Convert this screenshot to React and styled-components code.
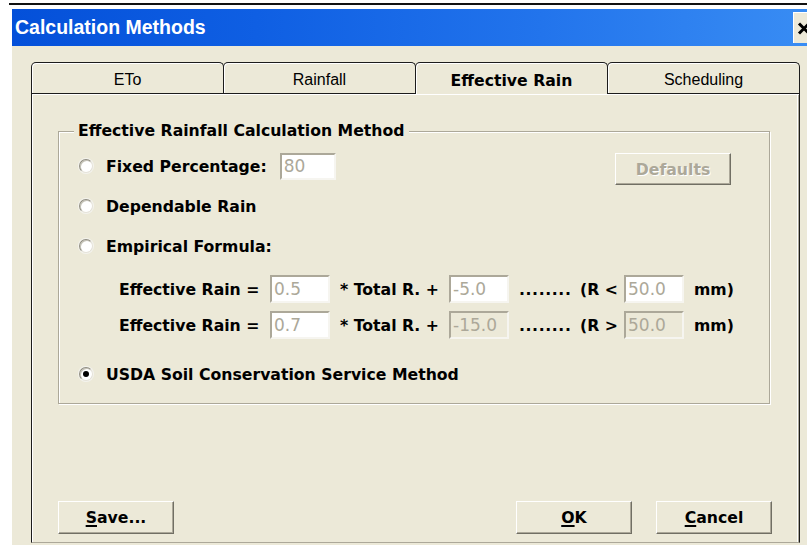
import React from 'react';
import styled, { createGlobalStyle, css } from 'styled-components';

const GlobalStyle = createGlobalStyle`
  html, body {
    margin: 0;
    padding: 0;
    background: #fff;
    overflow: hidden;
  }
  body {
    font-family: "DejaVu Sans", Verdana, sans-serif;
  }
`;

const BOLD = css`
  font-family: "DejaVu Sans", Verdana, sans-serif;
  font-weight: bold;
  font-size: 15.7px;
  color: #000;
`;

const Page = styled.div`
  width: 807px;
  height: 545px;
  overflow: hidden;
`;

const TopRule = styled.div`
  margin: 3px 0 0 9px;
  height: 2px;
  background: #111;
`;

const Window = styled.div`
  margin: 4px 0 0 12px;
  width: 815px;
  background: #ece9d8;
`;

const TitleBar = styled.div`
  height: 37px;
  display: flex;
  align-items: center;
  padding-left: 3px;
  background: linear-gradient(to right, #0450d9 0%, #0f5fe3 30%, #2274ec 65%, #3a8ef4 100%);
`;

const Title = styled.span`
  flex: 1;
  font-family: "Liberation Sans", Arial, sans-serif;
  font-weight: bold;
  font-size: 19.5px;
  color: #fff;
`;

const CloseButton = styled.div`
  box-sizing: border-box;
  width: 31px;
  height: 31px;
  margin-right: 3px;
  padding-left: 3px;
  display: flex;
  align-items: center;
  background: #ece9d8;
  border-top: 1px solid #fff;
  border-left: 1px solid #fff;
`;

const Body = styled.div`
  padding: 16px 27px 20px 19px;
`;

const TabStrip = styled.div`
  position: relative;
  z-index: 1;
  display: flex;
  align-items: flex-start;
  height: 31px;
`;

const Tab = styled.div`
  flex: 1;
  box-sizing: border-box;
  height: ${(p) => (p.$active ? '32px' : '31px')};
  margin-left: -1px;
  &:first-child {
    margin-left: 0;
  }
  padding-top: 4px;
  display: flex;
  align-items: center;
  justify-content: center;
  background: #ece9d8;
  border: 1px solid #1c1c1c;
  border-bottom: none;
  border-radius: 5px 5px 0 0;
  box-shadow: inset 1px 1px 0 #fff;
  ${(p) =>
    p.$active
      ? BOLD
      : css`
          font-family: "Liberation Sans", Arial, sans-serif;
          font-size: 16px;
          color: #000;
        `}
`;

const Panel = styled.div`
  box-sizing: border-box;
  height: 450px;
  padding: 37px 29px 0 26px;
  border: 1px solid #1c1c1c;
  border-bottom-color: #aca899;
  box-shadow: inset 1px 1px 0 #fff, inset -1px 0 0 #aca899, inset -2px 0 0 #fff;
`;

const Group = styled.div`
  position: relative;
  padding: 14px 0 9px 21px;
  border: 1px solid #aca899;
  box-shadow: inset 1px 1px 0 #fff, 1px 1px 0 #fff;
`;

const Legend = styled.span`
  position: absolute;
  top: -10px;
  left: 15px;
  padding: 0 4px;
  line-height: 18px;
  background: #ece9d8;
  ${BOLD}
`;

const OptionRow = styled.div`
  display: flex;
  align-items: center;
  height: 40px;
  margin-top: ${(p) => p.$gap || 0}px;
`;

const Radio = styled.span`
  position: relative;
  flex: none;
  box-sizing: border-box;
  width: 14px;
  height: 14px;
  margin: 0 13px 0 -1px;
  border-radius: 50%;
  background: #fff;
  border: 1px solid;
  border-color: #8f8d80 #e4e2d8 #e4e2d8 #8f8d80;
  box-shadow: inset 1px 1px 0 #c4c2b6, 0 0 0 1px #f4f3ee;
  ${(p) =>
    p.$checked &&
    css`
      &::after {
        content: '';
        position: absolute;
        left: 3px;
        top: 3px;
        width: 6px;
        height: 6px;
        border-radius: 50%;
        background: #000;
      }
    `}
`;

const Label = styled.span`
  ${BOLD}
  white-space: nowrap;
`;

const Field = styled.input`
  box-sizing: border-box;
  width: ${(p) => p.$w}px;
  height: ${(p) => p.$h}px;
  margin: 0 0 0 ${(p) => p.$ml || 0}px;
  padding: 0 0 0 2px;
  border: 2px solid;
  border-color: #aca899 #f6f5f0 #f6f5f0 #aca899;
  background: ${(p) => (p.$off ? '#ece9d8' : '#fff')};
  font-family: "DejaVu Sans", Verdana, sans-serif;
  font-size: 17px;
  color: #aca899;
  outline: none;
`;

const Button = styled.button`
  box-sizing: border-box;
  width: 116px;
  height: 33px;
  margin: 0;
  padding: 0;
  background: #ece9d8;
  border: 1px solid;
  border-color: #fff #716f64 #716f64 #fff;
  box-shadow: inset -1px -1px 0 #aca899;
  ${BOLD}
  ${(p) =>
    p.disabled &&
    css`
      color: #aca899;
      text-shadow: 1px 1px 0 #fff;
    `}
  u {
    text-decoration-thickness: 2px;
    text-underline-offset: 2px;
  }
`;

const DefaultsButton = styled(Button)`
  margin: 6px 38px 0 auto;
  height: 32px;
`;

const Formula = styled.div`
  display: grid;
  grid-template-columns: 151px 70px 109px 70px 61px 44px 70px auto;
  grid-auto-rows: 36px;
  align-items: center;
  margin-top: 5px;
  padding-left: 39px;
`;

const Dots = styled.span`
  ${BOLD}
  letter-spacing: 0.6px;
`;

const ButtonRow = styled.div`
  display: flex;
  gap: 24px;
  margin: 97px -2px 0 0;
`;

const Spacer = styled.div`
  flex: 1;
`;

const rules = [
  { a: '0.5', b: '-5.0', op: '<', c: '50.0', off: false },
  { a: '0.7', b: '-15.0', op: '>', c: '50.0', off: true },
];

export default function App() {
  return (
    <Page>
      <GlobalStyle />
      <TopRule />
      <Window>
        <TitleBar>
          <Title>Calculation Methods</Title>
          <CloseButton>
            <svg width="14" height="13" viewBox="0 0 14 13">
              <path d="M2 1.5 L12 11.5 M12 1.5 L2 11.5" stroke="#000" strokeWidth="3" />
            </svg>
          </CloseButton>
        </TitleBar>
        <Body>
          <TabStrip>
            <Tab>ETo</Tab>
            <Tab>Rainfall</Tab>
            <Tab $active>Effective Rain</Tab>
            <Tab>Scheduling</Tab>
          </TabStrip>
          <Panel>
            <Group>
              <Legend>Effective Rainfall Calculation Method</Legend>
              <OptionRow>
                <Radio />
                <Label>Fixed Percentage:</Label>
                <Field $w={56} $h={27} $ml={13} value="80" readOnly />
                <DefaultsButton disabled>Defaults</DefaultsButton>
              </OptionRow>
              <OptionRow>
                <Radio />
                <Label>Dependable Rain</Label>
              </OptionRow>
              <OptionRow>
                <Radio />
                <Label>Empirical Formula:</Label>
              </OptionRow>
              <Formula>
                {rules.map((r) => (
                  <React.Fragment key={r.a}>
                    <Label>Effective Rain =</Label>
                    <Field $w={60} $h={28} value={r.a} readOnly />
                    <Label>* Total R. +</Label>
                    <Field $w={60} $h={28} $off={r.off} value={r.b} readOnly />
                    <Dots>........</Dots>
                    <Label>(R {r.op}</Label>
                    <Field $w={60} $h={28} $off={r.off} value={r.c} readOnly />
                    <Label>mm)</Label>
                  </React.Fragment>
                ))}
              </Formula>
              <OptionRow $gap={11}>
                <Radio $checked />
                <Label>USDA Soil Conservation Service Method</Label>
              </OptionRow>
            </Group>
            <ButtonRow>
              <Button>
                <u>S</u>ave...
              </Button>
              <Spacer />
              <Button>
                <u>O</u>K
              </Button>
              <Button>
                <u>C</u>ancel
              </Button>
            </ButtonRow>
          </Panel>
        </Body>
      </Window>
    </Page>
  );
}
